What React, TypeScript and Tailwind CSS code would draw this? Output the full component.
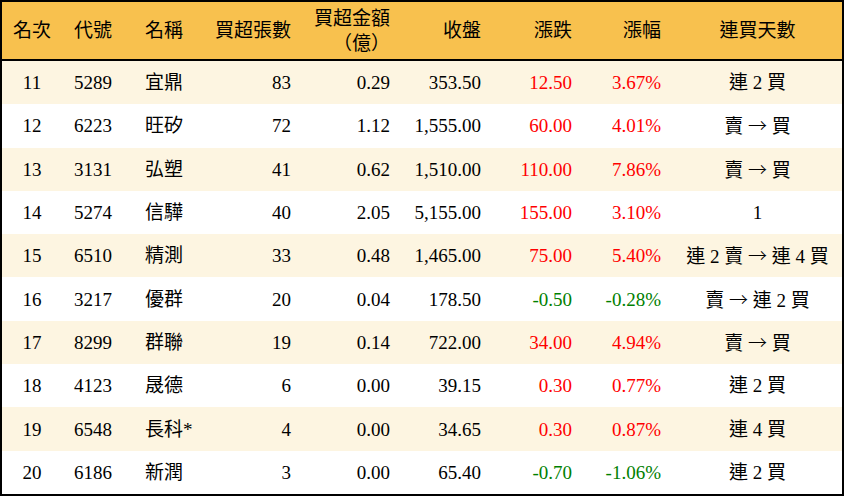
type Row = {
  rank: number;
  code: string;
  name: string;
  lots: number;
  amount: string;
  close: string;
  change: string;
  pct: string;
  streak: string;
};

const rows: Row[] = [
  { rank: 11, code: "5289", name: "宜鼎", lots: 83, amount: "0.29", close: "353.50", change: "12.50", pct: "3.67%", streak: "連 2 買" },
  { rank: 12, code: "6223", name: "旺矽", lots: 72, amount: "1.12", close: "1,555.00", change: "60.00", pct: "4.01%", streak: "賣 → 買" },
  { rank: 13, code: "3131", name: "弘塑", lots: 41, amount: "0.62", close: "1,510.00", change: "110.00", pct: "7.86%", streak: "賣 → 買" },
  { rank: 14, code: "5274", name: "信驊", lots: 40, amount: "2.05", close: "5,155.00", change: "155.00", pct: "3.10%", streak: "1" },
  { rank: 15, code: "6510", name: "精測", lots: 33, amount: "0.48", close: "1,465.00", change: "75.00", pct: "5.40%", streak: "連 2 賣 → 連 4 買" },
  { rank: 16, code: "3217", name: "優群", lots: 20, amount: "0.04", close: "178.50", change: "-0.50", pct: "-0.28%", streak: "賣 → 連 2 買" },
  { rank: 17, code: "8299", name: "群聯", lots: 19, amount: "0.14", close: "722.00", change: "34.00", pct: "4.94%", streak: "賣 → 買" },
  { rank: 18, code: "4123", name: "晟德", lots: 6, amount: "0.00", close: "39.15", change: "0.30", pct: "0.77%", streak: "連 2 買" },
  { rank: 19, code: "6548", name: "長科*", lots: 4, amount: "0.00", close: "34.65", change: "0.30", pct: "0.87%", streak: "連 4 買" },
  { rank: 20, code: "6186", name: "新潤", lots: 3, amount: "0.00", close: "65.40", change: "-0.70", pct: "-1.06%", streak: "連 2 買" },
];

const cols =
  "grid grid-cols-[60px_71px_70px_100px_99px_91px_91px_89px_169px]";

// the streak text keeps its arrow in the CJK face, where it is full width
function Streak({ text }: { text: string }) {
  const parts = text.split("→");

  return (
    <div className="whitespace-pre text-center">
      {parts.map((part, index) => (
        <span key={index}>
          {index > 0 && (
            <span className="font-['Noto_Sans_CJK_TC',sans-serif] font-light">
              →
            </span>
          )}
          {part}
        </span>
      ))}
    </div>
  );
}

export default function App() {
  return (
    <div className="flex h-[496px] w-[844px] flex-col border-2 border-black bg-white font-['Liberation_Serif','Noto_Sans_CJK_TC',serif] text-[19px] leading-none text-black">
      <div className={`${cols} h-[59px] shrink-0 items-center border-b-2 border-black bg-[#f8c14e]`}>
        <div className="text-center">名次</div>
        <div className="pl-3">代號</div>
        <div className="pl-3">名稱</div>
        <div className="pr-3 text-right">買超張數</div>
        <div className="pr-3 text-right leading-[25px]">
          買超金額
          <br />
          （億）
        </div>
        <div className="pr-3 text-right">收盤</div>
        <div className="pr-3 text-right">漲跌</div>
        <div className="pr-3 text-right">漲幅</div>
        <div className="text-center">連買天數</div>
      </div>

      <div className="flex flex-1 flex-col">
        {rows.map((row, index) => {
          const up = !row.change.startsWith("-");
          const tone = up ? "text-[#ff0000]" : "text-[#008000]";

          return (
            <div
              key={row.rank}
              className={`${cols} flex-1 items-center ${index % 2 === 0 ? "bg-[#fdf5e1]" : "bg-white"}`}
            >
              <div className="text-center">{row.rank}</div>
              <div className="pl-3">{row.code}</div>
              <div className="pl-3">{row.name}</div>
              <div className="pr-3 text-right">{row.lots}</div>
              <div className="pr-3 text-right">{row.amount}</div>
              <div className="pr-3 text-right">{row.close}</div>
              <div className={`pr-3 text-right ${tone}`}>{row.change}</div>
              <div className={`pr-3 text-right ${tone}`}>{row.pct}</div>
              <Streak text={row.streak} />
            </div>
          );
        })}
      </div>
    </div>
  );
}
